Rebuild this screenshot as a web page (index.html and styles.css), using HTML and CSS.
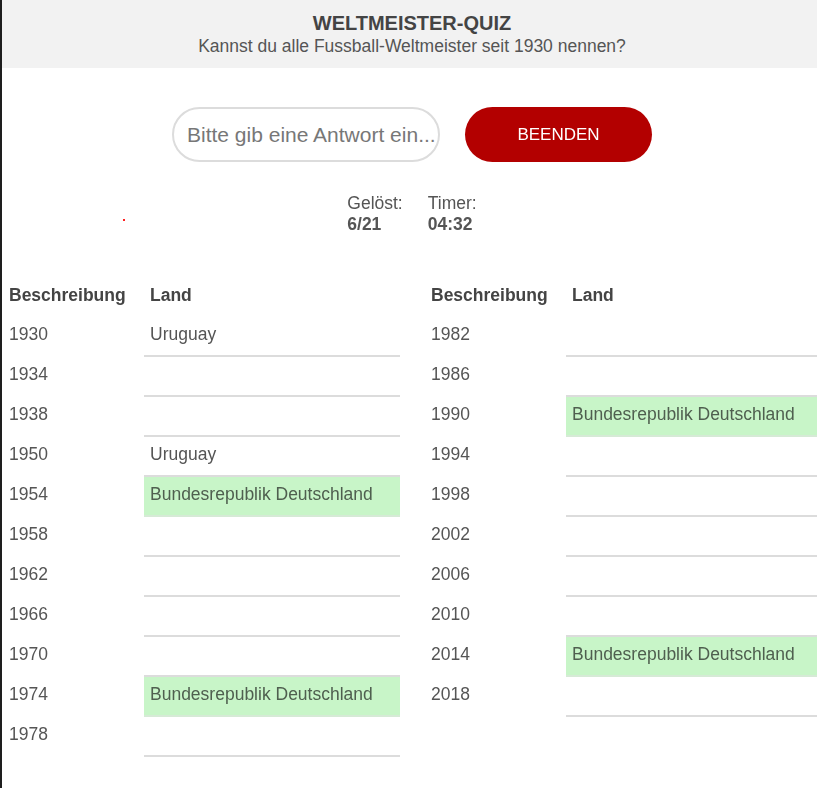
FILE: index.html
```html
<!DOCTYPE html>
<html lang="de">
<head>
<meta charset="utf-8">
<title>Weltmeister-Quiz</title>
<link rel="stylesheet" href="styles.css">
</head>
<body>
<div class="page">
  <header class="head">
    <h1 class="title">WELTMEISTER-QUIZ</h1>
    <p class="subtitle">Kannst du alle Fussball-Weltmeister seit 1930 nennen?</p>
  </header>

  <div class="controls">
    <input class="answer" type="text" placeholder="Bitte gib eine Antwort ein..." autofocus>
    <button class="stop" type="button">BEENDEN</button>
  </div>

  <div class="stats">
    <span class="dot"></span>
    <div class="stat">
      <div class="stat-label">Gelöst:</div>
      <div class="stat-value">6/21</div>
    </div>
    <div class="stat">
      <div class="stat-label">Timer:</div>
      <div class="stat-value">04:32</div>
    </div>
  </div>

  <div class="tables">
    <div class="quiz">
      <div class="th">Beschreibung</div><div class="th land-h">Land</div>
      <div class="yr">1930</div><div class="land">Uruguay</div>
      <div class="yr">1934</div><div class="land"></div>
      <div class="yr">1938</div><div class="land"></div>
      <div class="yr">1950</div><div class="land">Uruguay</div>
      <div class="yr">1954</div><div class="land ok">Bundesrepublik Deutschland</div>
      <div class="yr">1958</div><div class="land"></div>
      <div class="yr">1962</div><div class="land"></div>
      <div class="yr">1966</div><div class="land"></div>
      <div class="yr">1970</div><div class="land"></div>
      <div class="yr">1974</div><div class="land ok">Bundesrepublik Deutschland</div>
      <div class="yr">1978</div><div class="land"></div>
    </div>
    <div class="quiz">
      <div class="th">Beschreibung</div><div class="th land-h">Land</div>
      <div class="yr">1982</div><div class="land"></div>
      <div class="yr">1986</div><div class="land"></div>
      <div class="yr">1990</div><div class="land ok">Bundesrepublik Deutschland</div>
      <div class="yr">1994</div><div class="land"></div>
      <div class="yr">1998</div><div class="land"></div>
      <div class="yr">2002</div><div class="land"></div>
      <div class="yr">2006</div><div class="land"></div>
      <div class="yr">2010</div><div class="land"></div>
      <div class="yr">2014</div><div class="land ok">Bundesrepublik Deutschland</div>
      <div class="yr">2018</div><div class="land"></div>
    </div>
  </div>
</div>
</body>
</html>
```

FILE: styles.css
```css
html, body {
  margin: 0;
  padding: 0;
  overflow: hidden;
  background: #fff;
}

body {
  font-family: "Liberation Sans", Arial, sans-serif;
  font-size: 17.5px;
  color: #555;
}

.page {
  box-sizing: border-box;
  width: 822px;
  min-height: 788px;
  border-left: 2px solid #1e1e1e;
}

.head {
  background: #f2f2f2;
  height: 68px;
  box-sizing: border-box;
  padding-top: 12px;
  text-align: center;
}

.title {
  margin: 0;
  font-size: 20px;
  line-height: 23px;
  font-weight: bold;
  color: #444;
}

.subtitle {
  margin: 1px 0 0;
  font-size: 17.5px;
  line-height: 21px;
  color: #555;
}

.controls {
  display: flex;
  justify-content: center;
  gap: 25px;
  margin-top: 39px;
}

.answer {
  box-sizing: border-box;
  width: 268px;
  height: 55px;
  border: 2px solid #dcdcdc;
  border-radius: 28px;
  padding: 0 0 0 13px;
  font-family: "Liberation Sans", Arial, sans-serif;
  font-size: 21px;
  color: #555;
  background: #fff;
  outline: none;
  caret-color: #333;
}

.answer::placeholder {
  color: #777;
}

.stop {
  box-sizing: border-box;
  width: 187px;
  height: 55px;
  border: none;
  border-radius: 28px;
  background: #b30000;
  color: #fff;
  font-family: "Liberation Sans", Arial, sans-serif;
  font-size: 17px;
  cursor: pointer;
}

.stats {
  position: relative;
  display: flex;
  justify-content: center;
  gap: 25px;
  margin-top: 31px;
  line-height: 21px;
}

.dot {
  position: absolute;
  left: 121px;
  top: 26px;
  width: 2px;
  height: 2px;
  background: #ff2020;
}

.stat-value {
  font-weight: bold;
}

.tables {
  display: flex;
  gap: 25px;
  margin-top: 40px;
  padding-left: 1px;
}

.quiz {
  display: grid;
  grid-template-columns: 141px 256px;
  grid-template-rows: 42px;
  grid-auto-rows: 40px;
}

.th,
.yr,
.land {
  box-sizing: border-box;
  display: flex;
  align-items: center;
  padding: 0 6px;
  white-space: nowrap;
}

.th {
  font-weight: bold;
  color: #444;
  padding-bottom: 2px;
}

.yr {
  padding-bottom: 6px;
}

.land {
  padding-bottom: 4px;
  border-bottom: 2px solid #dcdcdc;
}

.land.ok {
  background: #c8f5c8;
  border-bottom-color: #d6ead6;
  color: #4f5f4f;
}
```
